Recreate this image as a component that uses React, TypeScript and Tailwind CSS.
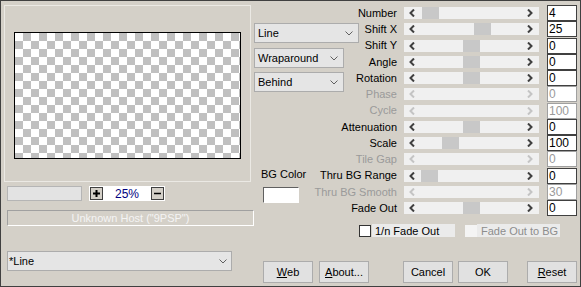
import React from 'react';

type SliderRowData = {
    label: string;
    value: string;
    thumb: number | null;
};

const rows: SliderRowData[] = [
    {label: 'Number', value: '4', thumb: 18},
    {label: 'Shift X', value: '25', thumb: 70},
    {label: 'Shift Y', value: '0', thumb: 59},
    {label: 'Angle', value: '0', thumb: 59},
    {label: 'Rotation', value: '0', thumb: 59},
    {label: 'Phase', value: '0', thumb: null},
    {label: 'Cycle', value: '100', thumb: null},
    {label: 'Attenuation', value: '0', thumb: 59},
    {label: 'Scale', value: '100', thumb: 38},
    {label: 'Tile Gap', value: '0', thumb: null},
    {label: 'Thru BG Range', value: '0', thumb: 17},
    {label: 'Thru BG Smooth', value: '30', thumb: null},
    {label: 'Fade Out', value: '0', thumb: 59},
];

function Arrow({dir, disabled}: { dir: 'left' | 'right'; disabled: boolean }) {
    const points = dir === 'left' ? '5,0.5 1.5,4 5,7.5' : '1,0.5 4.5,4 1,7.5';
    return (
        <svg width="6" height="8" viewBox="0 0 6 8" className="shrink-0">
            <polyline points={points} fill="none" stroke={disabled ? '#c4c4c4' : '#404040'} strokeWidth="2"/>
        </svg>
    );
}

function DropChevron() {
    return (
        <svg width="8" height="5" viewBox="0 0 8 5" className="shrink-0">
            <polyline points="0.5,0.5 4,4 7.5,0.5" fill="none" stroke="#606060" strokeWidth="1"/>
        </svg>
    );
}

function Dropdown({label, width}: { label: string; width: string }) {
    return (
        <div className={`flex h-[20px] ${width} items-center justify-between border border-[#acacac] bg-[#e5e5e5] pl-[3px] pr-[5px] text-[11px] text-black`}>
            <span>{label}</span>
            <DropChevron/>
        </div>
    );
}

function SliderRow({row}: { row: SliderRowData }) {
    const disabled = row.thumb === null;
    return (
        <div className="flex h-[16.25px] items-center">
            <div className={`flex min-w-0 flex-1 justify-end whitespace-nowrap text-[11px] ${disabled ? 'text-[#9a9a9a]' : 'text-black'}`}>
                <span className="shrink-0">{row.label}</span>
            </div>
            <div className="relative ml-[7px] flex h-[12px] w-[135px] shrink-0 items-center justify-between bg-[#f0f0f0] pl-[5px] pr-[6px]">
                <Arrow dir="left" disabled={disabled}/>
                {row.thumb !== null &&
                    <div className="absolute top-0 h-full w-[17px] bg-[#c8c8c8]" style={{left: row.thumb}}/>}
                <Arrow dir="right" disabled={disabled}/>
            </div>
            <div className={`ml-[8px] flex h-[16px] w-[30px] shrink-0 items-center border bg-white pl-[1px] text-[12px] ${disabled ? 'border-[#a0a0a0] text-[#9a9a9a]' : 'border-[#404040] text-black'}`}>
                {row.value}
            </div>
        </div>
    );
}

function Button({children, className = ''}: { children: React.ReactNode; className?: string }) {
    return (
        <div className={`flex h-[22px] w-[50px] shrink-0 items-center justify-center border border-[#acacac] bg-[#e1e1e1] text-[11px] text-black ${className}`}>
            {children}
        </div>
    );
}

export default function App() {
    return (
        <div className="flex h-[287px] w-[581px] border border-[#404040] bg-[#d4d0c8] font-['Liberation_Sans',Arial,sans-serif] text-[11px]">
            {/* preview side */}
            <div className="ml-[3px] flex w-[250px] shrink-0 flex-col pt-[4px]">
                <div className="h-[177px] w-[247px] border border-[#ebe9e4]">
                    <div className="ml-[9px] mt-[26px] h-[127px] w-[227px] border border-black bg-[image:conic-gradient(#c0c0c0_25%,#ffffff_0_50%,#c0c0c0_0_75%,#ffffff_0)] bg-[length:16px_16px]"/>
                </div>
                <div className="ml-[3px] mt-[4px] flex">
                    <div className="h-[15px] w-[75px] border border-[#b5b5b5] bg-[#e3e3e3]"/>
                    <div className="ml-[7px] flex h-[15px] w-[76px] items-center justify-between bg-white px-[1px]">
                        <div className="flex h-[13px] w-[13px] items-center justify-center border border-[#404040] bg-[#d4d0c8]">
                            <svg width="7" height="7" viewBox="0 0 7 7">
                                <path d="M3.5 0v7M0 3.5h7" stroke="#000" strokeWidth="2"/>
                            </svg>
                        </div>
                        <span className="text-[12px] text-[#000080]">25%</span>
                        <div className="flex h-[13px] w-[13px] items-center justify-center border border-[#404040] bg-[#d4d0c8]">
                            <svg width="7" height="7" viewBox="0 0 7 7">
                                <path d="M0 3.5h7" stroke="#000" strokeWidth="1.5"/>
                            </svg>
                        </div>
                    </div>
                </div>
                <div className="ml-[3px] mt-[9px] flex h-[16px] w-[247px] items-center justify-center border-b border-l border-r border-t border-b-white border-l-[#a0a0a0] border-r-white border-t-[#a0a0a0] text-[11px] text-[#f4f4f4]">
                    Unknown Host ("9PSP")
                </div>
                <div className="ml-[3px] mt-[25px] flex h-[20px] w-[225px] items-center justify-between border border-[#acacac] bg-[#e5e5e5] pl-[1px] pr-[4px] text-black">
                    <span>*Line</span>
                    <DropChevron/>
                </div>
            </div>

            {/* settings side */}
            <div className="flex min-w-0 flex-1 flex-col">
                <div className="flex">
                    <div className="flex w-[105px] shrink-0 flex-col pt-[22px]">
                        <Dropdown label="Line" width="w-[105px]"/>
                        <div className="mt-[5px]"><Dropdown label="Wraparound" width="w-[90px]"/></div>
                        <div className="mt-[4px]"><Dropdown label="Behind" width="w-[90px]"/></div>
                        <span className="ml-[7px] mt-[74px] text-black">BG Color</span>
                        <div className="ml-[9px] mt-[4px] h-[16px] w-[36px] border-b border-l border-r border-t border-b-white border-l-[#606060] border-r-white border-t-[#606060] bg-white"/>
                    </div>
                    <div className="flex min-w-0 flex-1 flex-col pr-[3px] pt-[4px]">
                        {rows.map(row => <SliderRow key={row.label} row={row}/>)}
                    </div>
                </div>

                <div className="ml-[105px] mt-[8px] flex items-center">
                    <div className="h-[12px] w-[12px] border border-[#333333] bg-white"/>
                    <div className="ml-[1px] flex h-[13px] w-[83px] items-center bg-[#ebebeb] pl-[3px] text-black">1/n Fade Out</div>
                    <div className="ml-[10px] h-[12px] w-[12px] bg-[#f4f4f4]"/>
                    <div className="flex h-[13px] w-[83px] items-center bg-[#ebebeb] pl-[4px] text-[#8d8d8d]">Fade Out to BG</div>
                </div>

                <div className="mt-[24px] flex">
                    <Button className="ml-[9px]"><span className="underline">W</span>eb</Button>
                    <Button className="ml-[6px]"><span className="underline">A</span>bout...</Button>
                    <Button className="ml-[34px]">Cancel</Button>
                    <Button className="ml-[5px]">OK</Button>
                    <Button className="ml-[19px]"><span className="underline">R</span>eset</Button>
                </div>
            </div>
        </div>
    );
}
